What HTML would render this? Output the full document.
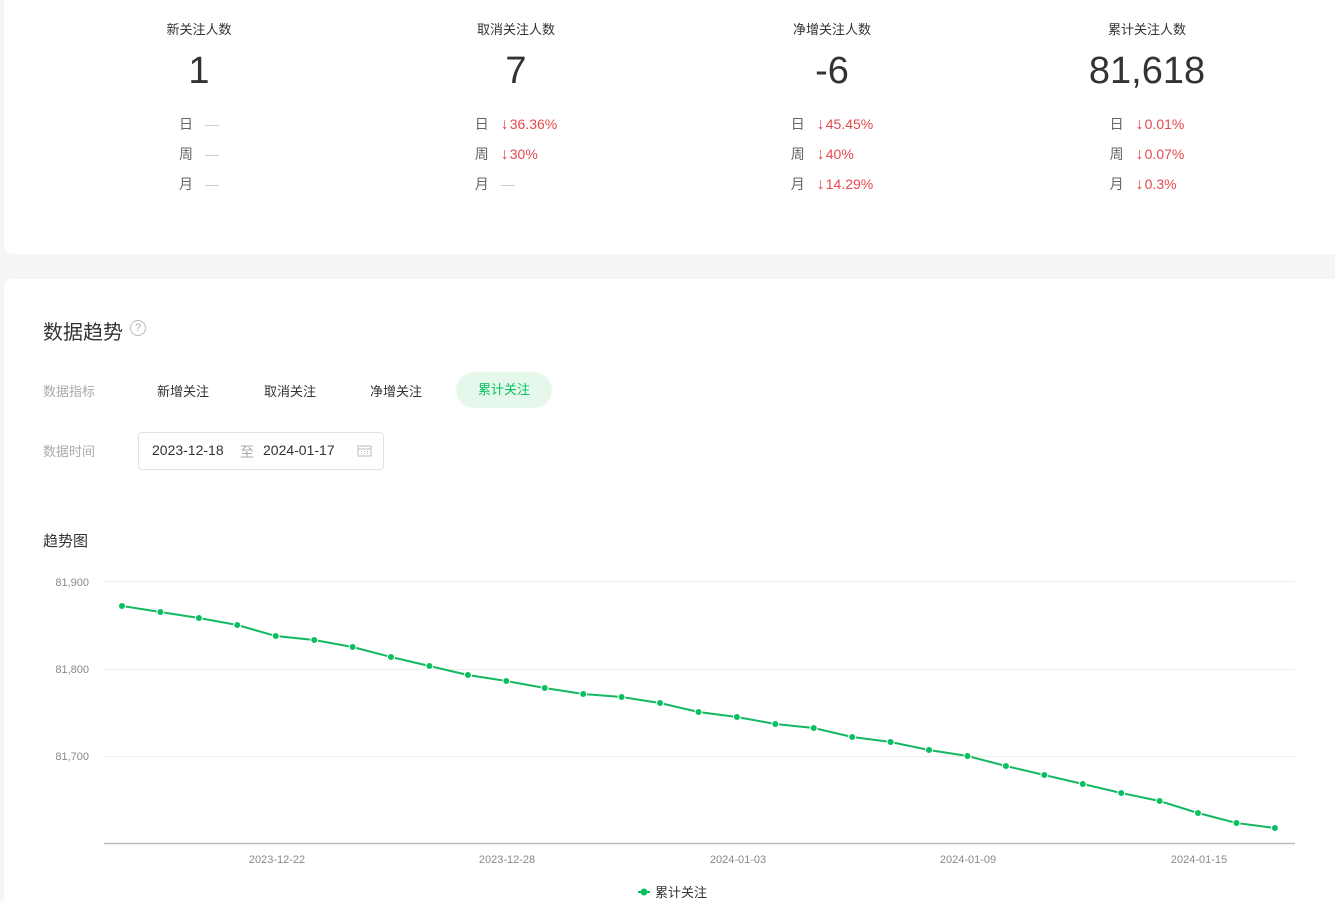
<!DOCTYPE html>
<html><head><meta charset="utf-8"><style>
*{margin:0;padding:0;box-sizing:border-box}
html,body{width:1335px;height:901px;overflow:hidden}
body{background:#f4f5f7;font-family:"Liberation Sans","Noto Sans CJK SC",sans-serif;position:relative;color:#333}
.card{position:absolute;background:#fff;border-radius:8px;left:4px;right:-10px}
.col{position:absolute;top:0;width:316px;text-align:center}
.t{position:absolute;top:19px;left:0;right:0;font-size:13px;color:#333}
.n{position:absolute;top:48px;left:0;right:0;font-size:38px;color:#333;line-height:46px}
.rows{position:absolute;top:114px;left:0;right:0;text-align:center}
.rb{display:inline-block;text-align:left}
.r{height:30px;font-size:14px;line-height:20px;white-space:nowrap}
.r .l{color:#666;display:inline-block;width:26px}
.r .d{color:#ccc}
.r .v{color:#e5484d}
.r .v b{font-weight:normal;font-size:16px;margin-right:1px}
.abs{position:absolute}
</style></head><body>
<div class="card" style="top:-10px;height:264px"></div>
<div class="col" style="left:41px"><div class="t">新关注人数</div><div class="n">1</div><div class="rows"><div class="rb"><div class="r"><span class="l">日</span><span class="d">—</span></div><div class="r"><span class="l">周</span><span class="d">—</span></div><div class="r"><span class="l">月</span><span class="d">—</span></div></div></div></div>
<div class="col" style="left:358px"><div class="t">取消关注人数</div><div class="n">7</div><div class="rows"><div class="rb"><div class="r"><span class="l">日</span><span class="v"><b>↓</b>36.36%</span></div><div class="r"><span class="l">周</span><span class="v"><b>↓</b>30%</span></div><div class="r"><span class="l">月</span><span class="d">—</span></div></div></div></div>
<div class="col" style="left:674px"><div class="t">净增关注人数</div><div class="n">-6</div><div class="rows"><div class="rb"><div class="r"><span class="l">日</span><span class="v"><b>↓</b>45.45%</span></div><div class="r"><span class="l">周</span><span class="v"><b>↓</b>40%</span></div><div class="r"><span class="l">月</span><span class="v"><b>↓</b>14.29%</span></div></div></div></div>
<div class="col" style="left:989px"><div class="t">累计关注人数</div><div class="n">81,618</div><div class="rows"><div class="rb"><div class="r"><span class="l">日</span><span class="v"><b>↓</b>0.01%</span></div><div class="r"><span class="l">周</span><span class="v"><b>↓</b>0.07%</span></div><div class="r"><span class="l">月</span><span class="v"><b>↓</b>0.3%</span></div></div></div></div>

<div class="card" style="top:279px;height:640px"></div>
<div class="abs" style="left:43px;top:316px;font-size:20px;color:#333">数据趋势</div>
<div class="abs" style="left:130px;top:320px;width:16px;height:16px;border:1px solid #bbb;border-radius:50%;font-size:11px;color:#aaa;text-align:center;line-height:14px">?</div>
<div class="abs" style="left:43px;top:381px;font-size:13px;color:#aaa">数据指标</div>
<div class="abs" style="left:157px;top:381px;font-size:13px;color:#333">新增关注</div>
<div class="abs" style="left:264px;top:381px;font-size:13px;color:#333">取消关注</div>
<div class="abs" style="left:370px;top:381px;font-size:13px;color:#333">净增关注</div>
<div class="abs" style="left:456px;top:372px;width:96px;height:36px;border-radius:18px;background:#e6f7ec;font-size:13px;color:#07c160;text-align:center;line-height:36px">累计关注</div>
<div class="abs" style="left:43px;top:441px;font-size:13px;color:#aaa">数据时间</div>
<div class="abs" style="left:138px;top:432px;width:246px;height:38px;border:1px solid #e2e2e2;border-radius:4px"></div>
<div class="abs" style="left:152px;top:442px;font-size:14px;color:#333">2023-12-18</div>
<div class="abs" style="left:240px;top:442px;font-size:14px;color:#aaa">至</div>
<div class="abs" style="left:263px;top:442px;font-size:14px;color:#333">2024-01-17</div>
<svg class="abs" style="left:357px;top:444px" width="16" height="14"><rect x="1" y="2" width="13" height="10" fill="none" stroke="#bbb"/><line x1="1" y1="5" x2="14" y2="5" stroke="#bbb"/><g fill="#bbb"><rect x="4" y="7" width="1" height="1"/><rect x="7" y="7" width="1" height="1"/><rect x="10" y="7" width="1" height="1"/><rect x="4" y="9" width="1" height="1"/><rect x="7" y="9" width="1" height="1"/><rect x="10" y="9" width="1" height="1"/></g></svg>
<div class="abs" style="left:43px;top:530px;font-size:15px;color:#333">趋势图</div>

<svg class="abs" style="left:0;top:0" width="1335" height="901">
<g stroke="#eee"><line x1="104" y1="581.5" x2="1295" y2="581.5"/><line x1="104" y1="669.5" x2="1295" y2="669.5"/><line x1="104" y1="756.5" x2="1295" y2="756.5"/></g>
<line x1="104" y1="843.5" x2="1295" y2="843.5" stroke="#bbb" stroke-width="1.5"/>
<g font-size="11" fill="#888" text-anchor="end" font-family="Liberation Sans,sans-serif"><text x="89" y="586">81,900</text><text x="89" y="673">81,800</text><text x="89" y="760">81,700</text></g>
<g font-size="11" fill="#888" text-anchor="middle" font-family="Liberation Sans,sans-serif"><text x="277" y="863">2023-12-22</text><text x="507" y="863">2023-12-28</text><text x="738" y="863">2024-01-03</text><text x="968" y="863">2024-01-09</text><text x="1199" y="863">2024-01-15</text></g>
<polyline fill="none" stroke="#13b863" stroke-width="2" points="122,606 160.4,612 198.9,618 237.3,625 275.7,636 314.2,640 352.6,647 391,657 429.4,666 467.9,675 506.3,681 544.7,688 583.2,694 621.6,697 660,703 698.5,712 736.9,717 775.3,724 813.7,728 852.2,737 890.6,742 929,750 967.5,756 1005.9,766 1044.3,775 1082.8,784 1121.2,793 1159.6,801 1198,813 1236.5,823 1274.9,828"/>
<g fill="#07c160" stroke="#fff" stroke-width="1">
<circle cx="122" cy="606" r="3.5"/><circle cx="160.4" cy="612" r="3.5"/><circle cx="198.9" cy="618" r="3.5"/><circle cx="237.3" cy="625" r="3.5"/><circle cx="275.7" cy="636" r="3.5"/><circle cx="314.2" cy="640" r="3.5"/><circle cx="352.6" cy="647" r="3.5"/><circle cx="391" cy="657" r="3.5"/><circle cx="429.4" cy="666" r="3.5"/><circle cx="467.9" cy="675" r="3.5"/><circle cx="506.3" cy="681" r="3.5"/><circle cx="544.7" cy="688" r="3.5"/><circle cx="583.2" cy="694" r="3.5"/><circle cx="621.6" cy="697" r="3.5"/><circle cx="660" cy="703" r="3.5"/><circle cx="698.5" cy="712" r="3.5"/><circle cx="736.9" cy="717" r="3.5"/><circle cx="775.3" cy="724" r="3.5"/><circle cx="813.7" cy="728" r="3.5"/><circle cx="852.2" cy="737" r="3.5"/><circle cx="890.6" cy="742" r="3.5"/><circle cx="929" cy="750" r="3.5"/><circle cx="967.5" cy="756" r="3.5"/><circle cx="1005.9" cy="766" r="3.5"/><circle cx="1044.3" cy="775" r="3.5"/><circle cx="1082.8" cy="784" r="3.5"/><circle cx="1121.2" cy="793" r="3.5"/><circle cx="1159.6" cy="801" r="3.5"/><circle cx="1198" cy="813" r="3.5"/><circle cx="1236.5" cy="823" r="3.5"/><circle cx="1274.9" cy="828" r="3.5"/>
</g>
<line x1="638" y1="892" x2="650" y2="892" stroke="#07c160" stroke-width="2"/><circle cx="644" cy="892" r="3.5" fill="#07c160"/>
<text x="655" y="897" font-size="13" fill="#333" font-family="Liberation Sans,Noto Sans CJK SC,sans-serif">累计关注</text>
</svg>
</body></html>
